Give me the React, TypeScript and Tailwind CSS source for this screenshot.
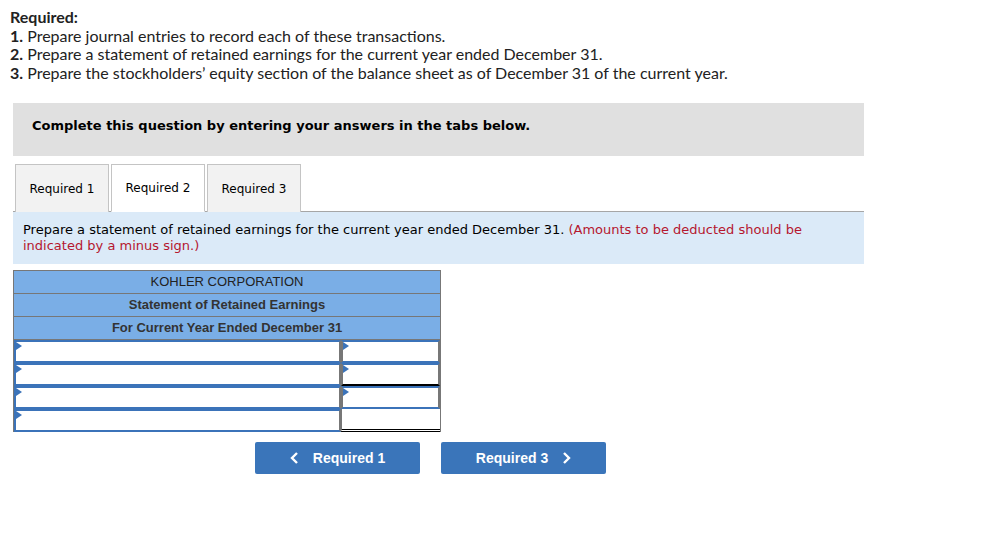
import React from 'react';

const Marker: React.FC = () => (
  <span className="absolute left-0 top-0 w-0 h-0 border-t-[4px] border-b-[4px] border-l-[6px] border-t-transparent border-b-transparent border-l-[#3b73b9]" />
);

const InputCell: React.FC<{ className?: string; marker?: boolean }> = ({ className = '', marker = true }) => (
  <div className={`relative h-[23px] ${className}`}>
    {marker && <Marker />}
  </div>
);

const App: React.FC = () => {
  const tabs = ['Required 1', 'Required 2', 'Required 3'];
  const active = 1;

  return (
    <div className="w-[983px] h-[557px] bg-white text-[#222]" style={{ fontFamily: 'Lato, "Liberation Sans", sans-serif' }}>
      <div className="pt-[8px] pl-[10px] text-[16px] leading-[18.5px]">
        <div className="font-bold">Required:</div>
        <div><span className="font-bold">1.</span> Prepare journal entries to record each of these transactions.</div>
        <div><span className="font-bold">2.</span> Prepare a statement of retained earnings for the current year ended December 31.</div>
        <div><span className="font-bold">3.</span> Prepare the stockholders’ equity section of the balance sheet as of December 31 of the current year.</div>
      </div>

      <div className="ml-[13px] w-[851px]" style={{ fontFamily: '"DejaVu Sans", Tahoma, sans-serif' }}>
        <div className="mt-[21px] h-[53px] bg-[#e0e0e0] flex items-center pl-[19px] pb-[8px] text-[13px] font-bold text-black">
          Complete this question by entering your answers in the tabs below.
        </div>

        <div className="mt-[8px] flex gap-[2px] pl-[2px] border-b border-[#a6a6a6] h-[48px]">
          {tabs.map((t, i) => (
            <div
              key={t}
              className={`w-[94px] h-[48px] flex items-center justify-center text-[12px] text-black border border-[#c4c4c4] ${
                i === active ? 'bg-white border-b-white border-[#a6a6a6]' : 'bg-[#f2f2f2] border-b-0'
              }`}
            >
              {t}
            </div>
          ))}
        </div>

        <div className="h-[52px] bg-[#dbeaf8] pl-[10px] pr-[40px] pt-[10px] text-[13px] leading-[16px] text-black">
          Prepare a statement of retained earnings for the current year ended December 31.{' '}
          <span className="text-[#b5172f]">(Amounts to be deducted should be indicated by a minus sign.)</span>
        </div>
      </div>

      <div className="ml-[13px] mt-[6px] w-[428px] border border-[#777] border-b-0" style={{ fontFamily: '"Liberation Sans", Arial, sans-serif' }}>
        <div className="h-[23px] bg-[#7aaee6] flex items-center justify-center text-[13px] text-[#222] border-b border-[#777]">KOHLER CORPORATION</div>
        <div className="h-[23px] bg-[#7aaee6] flex items-center justify-center text-[13px] font-bold text-[#333] border-b border-[#777]">Statement of Retained Earnings</div>
        <div className="h-[23px] bg-[#7aaee6] flex items-center justify-center text-[13px] font-bold text-[#333] border-b border-[#777]">For Current Year Ended December 31</div>

        <div className="grid grid-cols-[327px_1fr]">
          <InputCell className="border-2 border-[#3b73b9] border-r-[#777]" />
          <InputCell className="border-2 border-[#3b73b9] border-l-[#777] border-r-[#777]" />
          <InputCell className="border-2 border-[#3b73b9] border-r-[#777]" />
          <InputCell className="border-2 border-[#3b73b9] border-l-[#777] border-r-[#777] border-b-[#000]" />
          <InputCell className="border-2 border-[#3b73b9] border-r-[#777]" />
          <InputCell className="border-2 border-[#3b73b9] border-l-[#777] border-r-[#777]" />
          <InputCell className="border-2 border-[#3b73b9] border-r-[#777]" />
          <InputCell marker={false} className="border-l border-[#777] border-b-[3px] border-b-black border-double" />
        </div>
      </div>

      <div className="mt-[10px] ml-[255px] flex gap-[21px]" style={{ fontFamily: '"Liberation Sans", Arial, sans-serif' }}>
        <button className="w-[165px] h-[32px] bg-[#3a75ba] rounded-[2px] text-white font-bold text-[14px] flex items-center justify-center gap-[14px]">
          <svg width="9" height="12" viewBox="0 0 9 12"><path d="M7 1 L2 6 L7 11" stroke="white" strokeWidth="2.4" fill="none" /></svg>
          Required 1
        </button>
        <button className="w-[165px] h-[32px] bg-[#3a75ba] rounded-[2px] text-white font-bold text-[14px] flex items-center justify-center gap-[14px]">
          Required 3
          <svg width="9" height="12" viewBox="0 0 9 12"><path d="M2 1 L7 6 L2 11" stroke="white" strokeWidth="2.4" fill="none" /></svg>
        </button>
      </div>
    </div>
  );
};

export default App;
